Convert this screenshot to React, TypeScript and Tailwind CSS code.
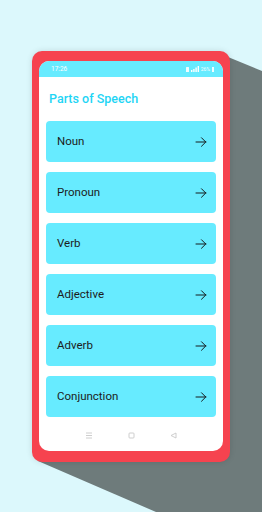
import React from "react";

function Arrow() {
  return (
    <svg width="12" height="12" viewBox="0 0 24 24" fill="none" stroke="#111" strokeWidth="1.9" strokeLinecap="round" strokeLinejoin="round">
      <path d="M2 12h20" />
      <path d="M13 3.5l8.5 8.5-8.5 8.5" />
    </svg>
  );
}

const items = ["Noun", "Pronoun", "Verb", "Adjective", "Adverb", "Conjunction"];

export default function App() {
  return (
    <div className="relative w-[262px] h-[512px] overflow-hidden bg-[#dcf8fc]" style={{ fontFamily: "Roboto, 'Noto Sans', sans-serif" }}>
      <svg className="absolute inset-0" width="262" height="512" viewBox="0 0 262 512">
        <polygon points="228,57 262,71 262,512 156,512 38,461" fill="#6e7b7b" />
      </svg>
      <div className="relative pt-[51px] pl-[32px]">
        <div className="w-[198px] h-[411px] bg-[#f6434f] rounded-[10px] pt-[10px] px-[7px] pb-[11px] shadow-[0_0_6px_rgba(0,0,0,0.12)]">
          <div className="w-full h-full bg-white rounded-[10px] overflow-hidden flex flex-col">
            <div className="h-[16px] bg-[#67ebff] flex items-center justify-between pl-[12px] pr-[9px]">
              <span className="text-[6.5px] text-white leading-none">17:26</span>
              <div className="flex items-center gap-[2px]">
                <div className="w-[3px] h-[5px] bg-white/90 rounded-[0.5px]" />
                <svg width="8" height="6" viewBox="0 0 8 6">
                  <rect x="0" y="4" width="1.4" height="2" fill="white" />
                  <rect x="2.2" y="3" width="1.4" height="3" fill="white" />
                  <rect x="4.4" y="1.5" width="1.4" height="4.5" fill="white" />
                  <rect x="6.6" y="0" width="1.4" height="6" fill="white" />
                </svg>
                <span className="text-[5px] text-white leading-none">26%</span>
                <div className="w-[2px] h-[5px] bg-white/90" />
              </div>
            </div>
            <div className="h-[44px] flex items-center pl-[10px]">
              <span className="text-[12.5px] font-medium text-[#1fd5f5] leading-none">Parts of Speech</span>
            </div>
            <div className="flex flex-col gap-[10px] px-[7px]">
              {items.map((t) => (
                <div key={t} className="h-[41px] bg-[#67ebff] rounded-[4px] flex items-center justify-between pl-[11px] pr-[9px]">
                  <span className="text-[11.5px] text-[#1c1c1c]">{t}</span>
                  <Arrow />
                </div>
              ))}
            </div>
            <div className="flex-1 flex items-center justify-center gap-[35px] pt-[2px]">
              <svg width="8" height="7" viewBox="0 0 8 7" stroke="#c8c8c8" strokeWidth="0.9">
                <path d="M1 1h6M1 3.5h6M1 6h6" />
              </svg>
              <svg width="7" height="7" viewBox="0 0 7 7" fill="none" stroke="#c8c8c8" strokeWidth="0.9">
                <rect x="1" y="1" width="5" height="5" rx="0.8" />
              </svg>
              <svg width="7" height="7" viewBox="0 0 7 7" fill="none" stroke="#c8c8c8" strokeWidth="0.9">
                <path d="M6 1L1 3.5L6 6Z" />
              </svg>
            </div>
          </div>
        </div>
      </div>
    </div>
  );
}
